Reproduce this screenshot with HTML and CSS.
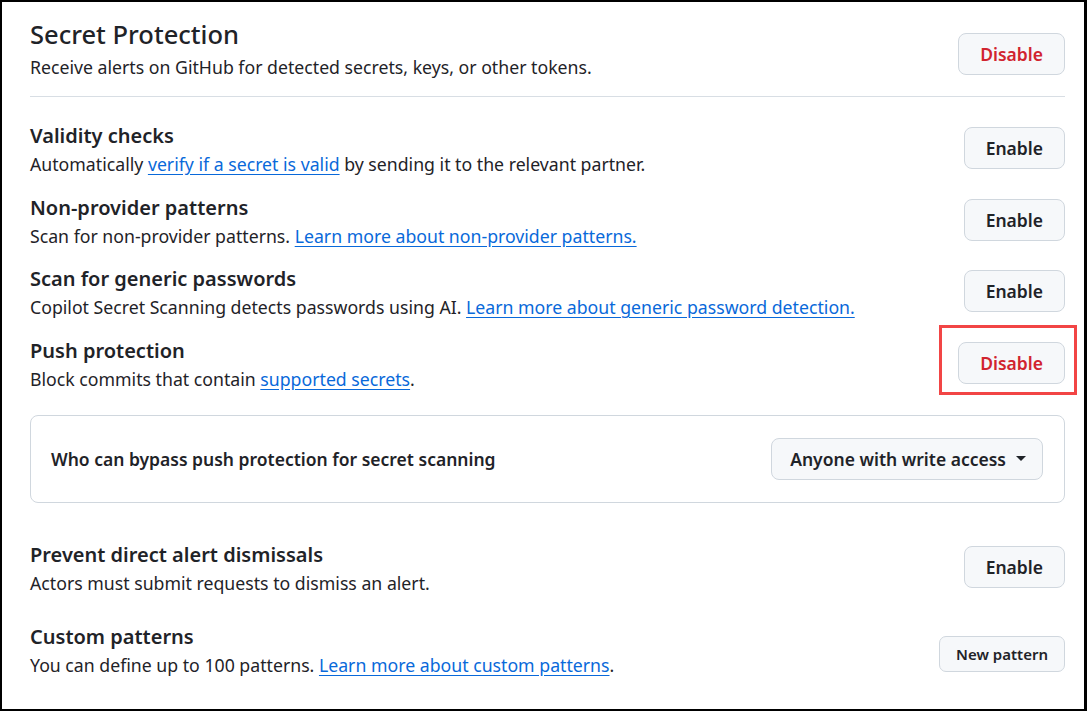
FILE: index.html
```html
<!DOCTYPE html>
<html>
<head>
<meta charset="utf-8">
<link rel="stylesheet" href="styles.css">
</head>
<body>
<div class="frame">
  <div class="header">
    <div class="text">
      <h2 class="page-title">Secret Protection</h2>
      <p class="desc">Receive alerts on GitHub for detected secrets, keys, or other tokens.</p>
    </div>
    <button class="btn danger">Disable</button>
  </div>

  <div class="row first">
    <div class="text">
      <h3 class="title">Validity checks</h3>
      <p class="desc">Automatically <a href="#">verify if a secret is valid</a> by sending it to the relevant partner.</p>
    </div>
    <button class="btn">Enable</button>
  </div>

  <div class="row">
    <div class="text">
      <h3 class="title">Non-provider patterns</h3>
      <p class="desc">Scan for non-provider patterns. <a href="#">Learn more about non-provider patterns.</a></p>
    </div>
    <button class="btn">Enable</button>
  </div>

  <div class="row">
    <div class="text">
      <h3 class="title">Scan for generic passwords</h3>
      <p class="desc">Copilot Secret Scanning detects passwords using AI. <a href="#">Learn more about generic password detection.</a></p>
    </div>
    <button class="btn">Enable</button>
  </div>

  <div class="row">
    <div class="text">
      <h3 class="title">Push protection</h3>
      <p class="desc">Block commits that contain <a href="#">supported secrets</a>.</p>
    </div>
    <div class="btn-wrap">
      <button class="btn danger">Disable</button>
      <span class="highlight"></span>
    </div>
  </div>

  <div class="bypass">
    <span class="bypass-label">Who can bypass push protection for secret scanning</span>
    <button class="btn dropdown">Anyone with write access <span class="caret"></span></button>
  </div>

  <div class="row after-box">
    <div class="text">
      <h3 class="title">Prevent direct alert dismissals</h3>
      <p class="desc">Actors must submit requests to dismiss an alert.</p>
    </div>
    <button class="btn">Enable</button>
  </div>

  <div class="row custom">
    <div class="text">
      <h3 class="title">Custom patterns</h3>
      <p class="desc">You can define up to 100 patterns. <a href="#">Learn more about custom patterns</a>.</p>
    </div>
    <button class="btn small">New pattern</button>
  </div>
</div>
</body>
</html>
```

FILE: styles.css
```css
* { box-sizing: border-box; }
html, body { margin: 0; padding: 0; background: #fff; }
body {
  font-family: "Segoe UI", "Noto Sans", "Liberation Sans", sans-serif;
  color: #1f2328;
}
.frame {
  width: 1087px;
  height: 711px;
  border: 2px solid #000;
  border-right-width: 3px;
  padding: 0 19px 0 28px;
  overflow: hidden;
}
h2, h3, p { margin: 0; }
.header {
  display: flex;
  align-items: flex-start;
  justify-content: space-between;
  padding: 14px 0 15px;
  border-bottom: 1px solid #d8dee4;
}
.header .btn { margin-top: 17px; }
.page-title {
  font-size: 25.5px;
  font-weight: 500;
  line-height: 37px;
}
.desc {
  font-size: 17.7px;
  line-height: 29px;
}
.header .desc { line-height: 28px; }
.desc a {
  color: #0969da;
  text-decoration: underline;
  text-underline-offset: 3px;
}
.title {
  font-size: 20px;
  font-weight: 600;
  line-height: 28px;
}
.row {
  display: flex;
  align-items: flex-start;
  justify-content: space-between;
  margin-top: 14.67px;
}
.row > .btn, .row > .btn-wrap { margin-top: 5px; }
.row.first { margin-top: 25px; }
.row.after-box { margin-top: 38px; }
.row.custom { margin-top: 25px; }
.row.custom > .btn { margin-top: 13px; }
.btn {
  font-family: inherit;
  font-size: 17.5px;
  font-weight: 600;
  color: #1f2328;
  background: #f6f8fa;
  border: 1px solid #d0d7de;
  border-radius: 8px;
  height: 42px;
  padding: 0 21px;
  cursor: pointer;
}
.btn.danger { color: #d1242f; }
.btn.small {
  font-size: 15px;
  height: 36px;
  padding: 0 16px;
  border-radius: 7px;
}
.btn-wrap {
  position: relative;
  display: flex;
}
.highlight {
  position: absolute;
  top: -17px;
  right: -12px;
  bottom: -11px;
  left: -19px;
  border: 3px solid #f24545;
  pointer-events: none;
}
.bypass {
  display: flex;
  align-items: center;
  justify-content: space-between;
  margin-top: 21px;
  border: 1px solid #d0d7de;
  border-radius: 8px;
  padding: 22px 21px 22px 20px;
}
.bypass-label {
  font-size: 17.5px;
  font-weight: 600;
}
.dropdown {
  display: flex;
  align-items: center;
  gap: 10px;
  padding: 0 16px 0 18px;
  font-size: 17.5px;
}
.caret {
  width: 0;
  height: 0;
  border-left: 5px solid transparent;
  border-right: 5px solid transparent;
  border-top: 5px solid #1f2328;
}
```
